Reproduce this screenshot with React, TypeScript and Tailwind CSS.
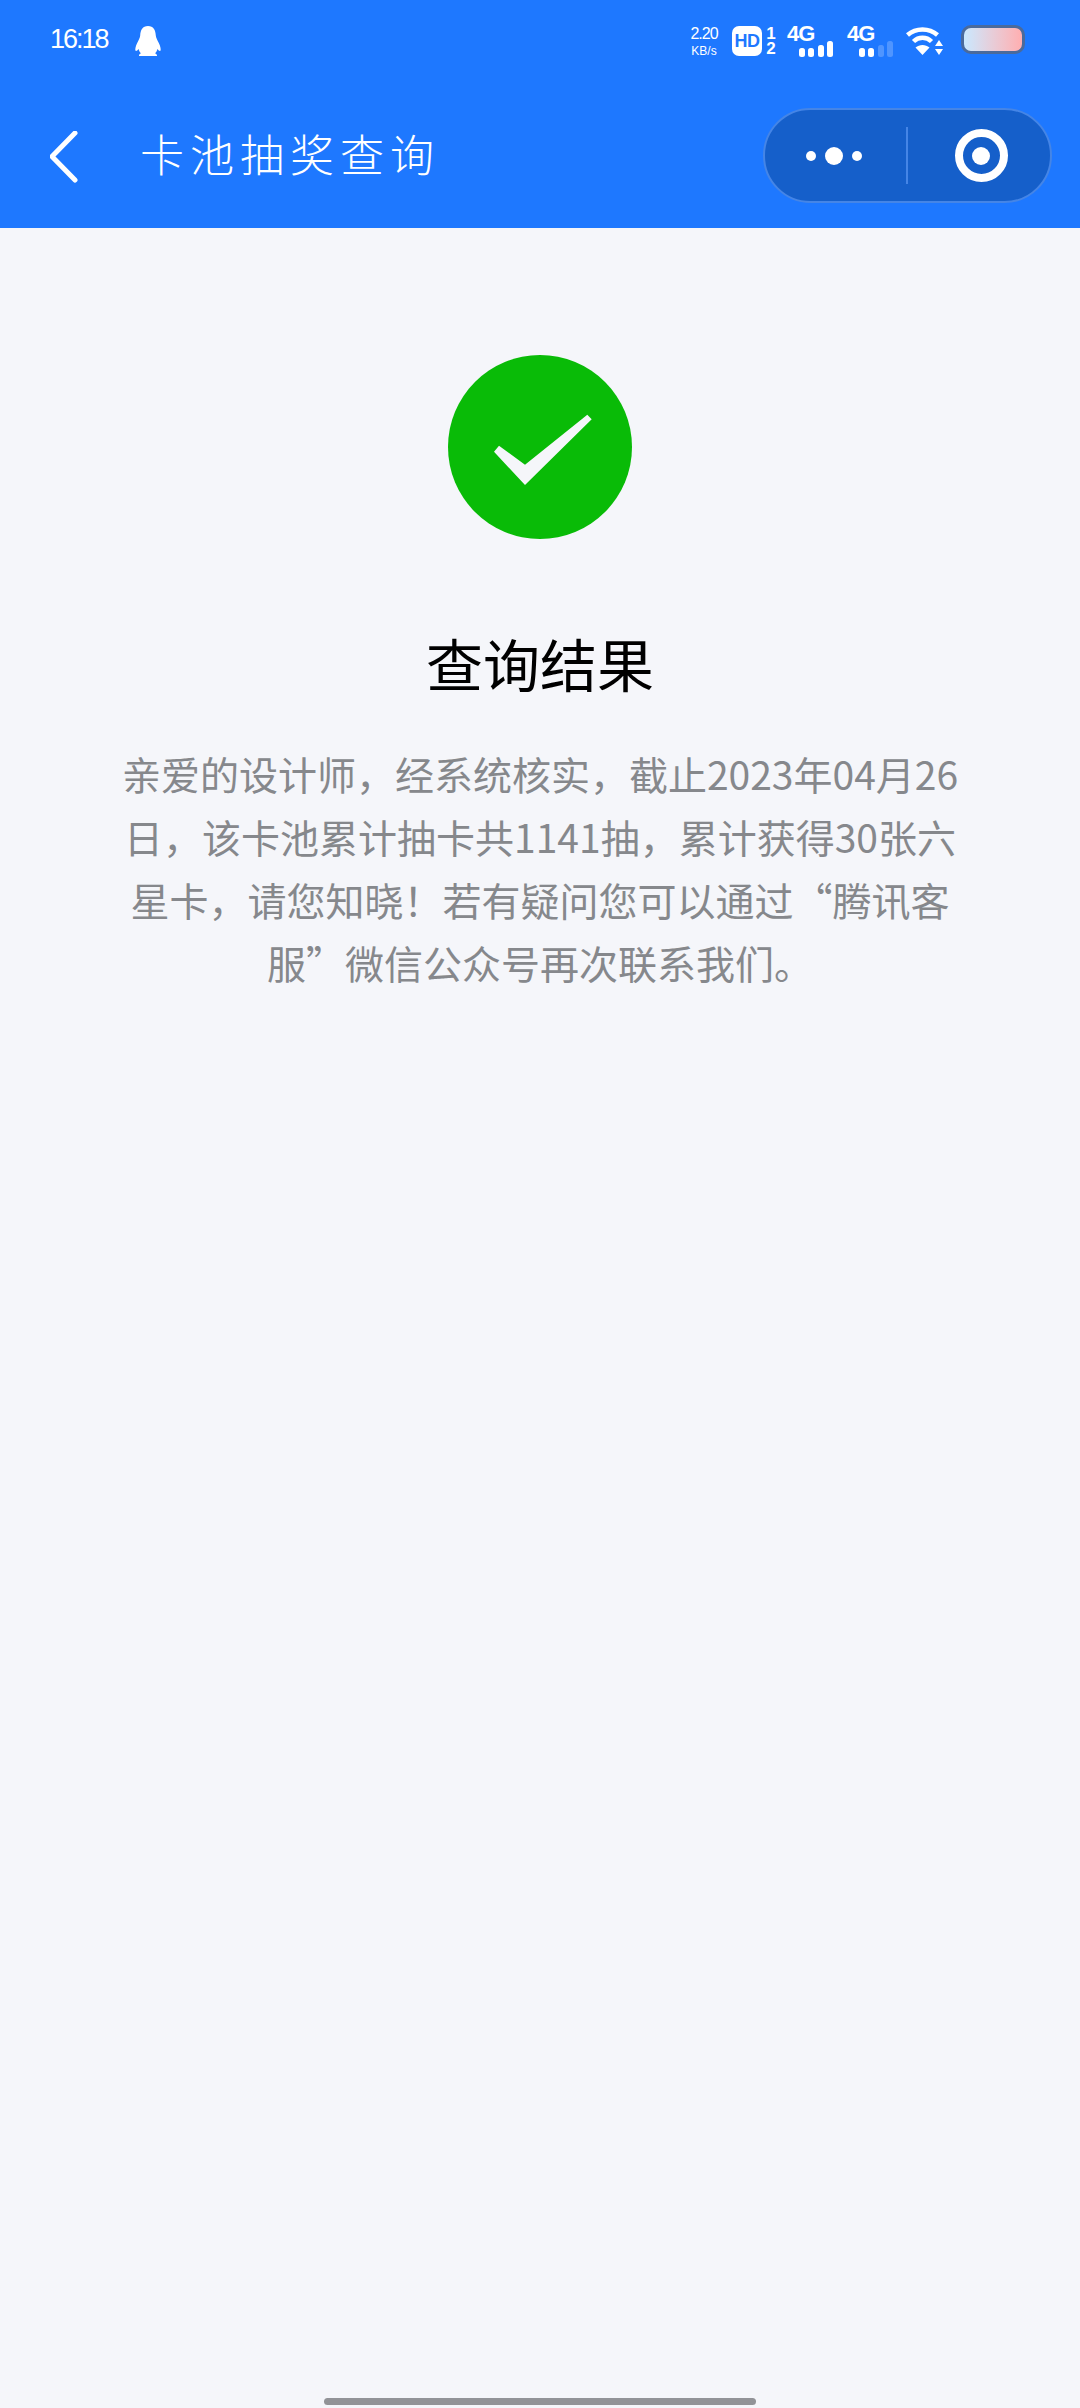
import React from 'react';

const cjk = '"Noto Sans CJK SC", "Noto Sans", sans-serif';

// signal bars: `active` of the four bars are solid
const Signal = ({ active }: { active: number }) => (
  <div className="flex flex-col w-[48px]">
    <span className="text-[22px] leading-[16px] font-bold text-white font-['Liberation_Sans',sans-serif] tracking-[-1px]">4G</span>
    <svg width="48" height="18" viewBox="0 0 48 18" className="-mt-[2px]">
      {[
        { x: 13, y: 8, h: 9 },
        { x: 22, y: 8, h: 9 },
        { x: 32, y: 5, h: 12 },
        { x: 41, y: 1, h: 16 },
      ].map((b, i) => (
        <rect key={i} x={b.x - 1} y={b.y} width="6" height={b.h} rx="2.5" fill="#fff" fillOpacity={i < active ? 1 : 0.22} />
      ))}
    </svg>
  </div>
);

const StatusBar = () => (
  <div className="h-[108px] flex items-start justify-between pl-[50px] pr-[55px] pt-[26px] text-white">
    <div className="flex items-start">
      <span className="w-[58px] text-[27px] leading-[26px] font-extralight tracking-[-2px] font-['Liberation_Sans',sans-serif]">16:18</span>
      <svg width="26" height="31" viewBox="0 0 26 31" className="ml-[27px]">
        <path
          d="M13 0C7.500 0 5.500 4 5.200 9.500 5 12 3.600 14 2.200 17 .6 20.300 0 23 .4 24.600c.6.800 2 0 3.200-1.600.4 1.800 1.200 3.200 2.400 4.300-1.500.8-2.200 1.500-2 2.700h7.300c1 0 2.400 0 3.400 0H22c.200-1.200-.5-1.900-2-2.700 1.200-1.100 2-2.500 2.400-4.300 1.200 1.600 2.600 2.400 3.200 1.600.4-1.600-.2-4.300-1.800-7.600-1.400-3-2.800-5-3-7.500C20.500 4 18.500 0 13 0z"
          fill="#fff"
        />
      </svg>
    </div>
    <div className="flex items-start">
      <div className="flex flex-col items-center w-[30px] font-['Liberation_Sans',sans-serif] font-light">
        <span className="text-[16px] leading-[16px] tracking-[-1px]">2.20</span>
        <span className="text-[12px] leading-[12px] mt-[3px]">KB/s</span>
      </div>
      <div className="ml-[13px] flex items-center justify-center w-[30px] h-[30px] rounded-[7px] bg-white text-[#1e78ff] text-[18px] font-bold font-['Liberation_Sans',sans-serif] tracking-[-0.5px]">HD</div>
      <div className="ml-[3px] w-[12px] flex flex-col items-center text-[17px] leading-[15px] font-bold font-['Liberation_Sans',sans-serif]">
        <span>1</span>
        <span>2</span>
      </div>
      <div className="ml-[10px]">
        <Signal active={4} />
      </div>
      <div className="ml-[12px]">
        <Signal active={2} />
      </div>
      <svg width="38" height="30" viewBox="0 0 38 30" className="ml-[11px]">
        <path d="M1.500 9C10 1.500 23 1.500 31.500 9" fill="none" stroke="#fff" strokeWidth="4.500" />
        <path d="M7.500 15.500C12.500 10.500 20.500 10.500 25.500 15.500" fill="none" stroke="#fff" strokeWidth="4.500" />
        <path d="M16.500 29 9.500 21.500C13.500 18 19.500 18 23.500 21.500z" fill="#fff" />
        <path d="M33 14l4 6h-8zM33 29l-4-6h8z" fill="#fff" />
      </svg>
      <div className="ml-[17px] -mt-[1px] w-[64px] h-[29px] rounded-[10px] border-[3px] border-[#4a6a9c] bg-gradient-to-r from-[#c8e8ff] to-[#ffaeb0]" />
    </div>
  </div>
);

const NavBar = () => (
  <div className="flex items-start pl-[50px]">
    <svg width="30" height="52" viewBox="0 0 30 52" className="mt-[23px]">
      <path d="M25 2 2 25.500 25 49" fill="none" stroke="#fff" strokeWidth="5" strokeLinecap="round" strokeLinejoin="round" />
    </svg>
    <h1 className="ml-[60px] mt-[15px] text-[44px] leading-[60px] font-extralight tracking-[6px] text-white" style={{ fontFamily: cjk }}>
      卡池抽奖查询
    </h1>
    <div className="ml-auto mr-[28px] w-[289px] h-[95px] rounded-full bg-[#155fca] border-2 border-[#4585e6] flex items-center">
      <div className="flex-1 flex items-center justify-center gap-[9px] pr-[3px]">
        <span className="w-[10px] h-[10px] rounded-full bg-white" />
        <span className="w-[18px] h-[18px] rounded-full bg-white" />
        <span className="w-[10px] h-[10px] rounded-full bg-white" />
      </div>
      <div className="w-[2px] h-[57px] bg-[#4585e6]" />
      <div className="flex-1 flex items-center justify-center pl-[4px]">
        <div className="w-[53px] h-[53px] rounded-full border-[8px] border-white flex items-center justify-center">
          <div className="w-[18px] h-[18px] rounded-full bg-white" />
        </div>
      </div>
    </div>
  </div>
);

export default function App() {
  return (
    <div className="w-[1080px] h-[2408px] bg-[#f5f6fa] flex flex-col overflow-hidden" style={{ fontFamily: cjk }}>
      <header className="h-[228px] shrink-0 bg-[#1e78ff]">
        <StatusBar />
        <NavBar />
      </header>

      <main className="flex flex-col items-center pt-[127px]">
        <div className="w-[184px] h-[184px] rounded-full bg-[#09bb07] flex items-center justify-center">
          <svg width="184" height="184" viewBox="0 0 184 184">
            <path d="M46 96.700 51 90.700 77 109.700 139.300 59.700 143.700 64.300 77 130z" fill="#f5f6fa" />
          </svg>
        </div>
        <h2 className="mt-[91px] text-[57px] leading-[64px] font-normal text-black">查询结果</h2>
        <p className="mt-[48px] w-[850px] text-center text-[39px] leading-[63px] text-[#86888c]">
          亲爱的设计师，经系统核实，截止2023年04月26日，该卡池累计抽卡共1141抽，累计获得30张六星卡，请您知晓！若有疑问您可以通过“腾讯客服”微信公众号再次联系我们。
        </p>
      </main>

      <div className="mt-auto mb-[3px] mx-auto w-[432px] h-[7px] rounded-full bg-[#929397]" />
    </div>
  );
}
